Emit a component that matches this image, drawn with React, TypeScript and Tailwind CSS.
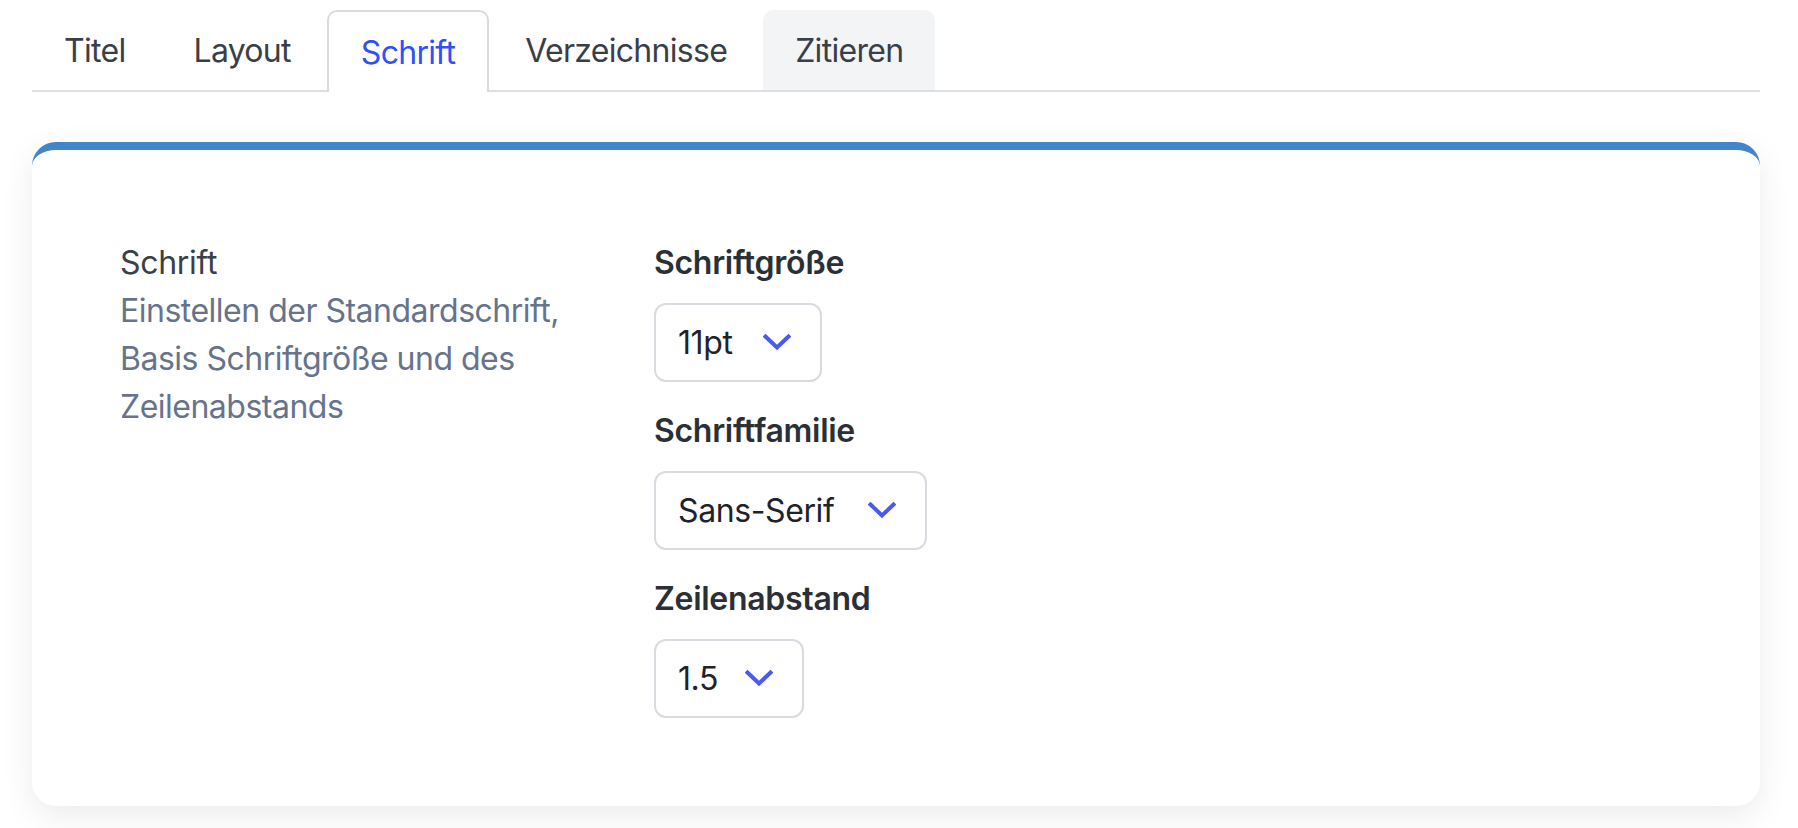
import React from "react";

const tabs = ["Titel", "Layout", "Schrift", "Verzeichnisse", "Zitieren"];

function Chevron() {
  return (
    <svg width="28" height="17" viewBox="0 0 28 17" fill="none" className="shrink-0">
      <polyline
        points="2.5,2.5 14,13.5 25.5,2.5"
        stroke="#4a5af0"
        strokeWidth="4"
        strokeLinecap="square"
        strokeLinejoin="miter"
      />
    </svg>
  );
}

function SelectBox({ value, width }: { value: string; width: string }) {
  return (
    <div
      className={`mt-4 flex h-[79px] items-center justify-between rounded-[12px] border-2 border-[#d8dbe0] bg-white pl-[22px] pr-[29px] text-[32px] tracking-[-0.4px] text-[#1f2329] ${width}`}
    >
      <span>{value}</span>
      <Chevron />
    </div>
  );
}

export default function App() {
  const active = "Schrift";

  return (
    <div className="min-h-screen bg-white pl-8 pr-[38px] pt-[10px] font-['Inter',sans-serif]">
      {/* Tabs */}
      <div className="flex items-end gap-1 border-b-2 border-[#dcdee3]">
        {tabs.map((t) => {
          if (t === active) {
            return (
              <div
                key={t}
                className="-mb-[2px] flex h-[82px] items-center rounded-t-[10px] border-2 border-b-0 border-[#d8dbe0] bg-white px-8 pt-[2px] text-[32px] tracking-[-0.7px] text-[#3050f8]"
              >
                {t}
              </div>
            );
          }
          return (
            <div
              key={t}
              className={`flex h-[80px] items-center rounded-t-[10px] px-8 pt-[2px] text-[32px] tracking-[-0.7px] text-[#3a3e48] ${
                t === "Zitieren" ? "bg-[#f3f4f6]" : ""
              }`}
            >
              {t}
            </div>
          );
        })}
      </div>

      {/* Card */}
      <div className="mt-[50px] rounded-[24px] border-t-8 border-[#4285c8] bg-white px-[88px] pt-[89px] pb-[88px] shadow-[0_10px_32px_rgba(0,0,0,0.08)]">
        <div className="flex gap-[64px]">
          <div className="w-[470px] shrink-0">
            <p className="text-[32px] leading-[48px] tracking-[-0.3px] text-[#3a3f48]">Schrift</p>
            <p className="text-[32px] leading-[48px] tracking-[-0.5px] text-[#66738b]">
              Einstellen der Standardschrift, Basis Schriftgröße und des Zeilenabstands
            </p>
          </div>

          <div className="flex flex-col">
            <label className="text-[32px] font-semibold leading-[48px] tracking-[-0.3px] text-[#2b2f36]">Schriftgröße</label>
            <SelectBox value="11pt" width="w-[168px]" />

            <label className="mt-[25px] text-[32px] font-semibold leading-[48px] tracking-[-0.3px] text-[#2b2f36]">Schriftfamilie</label>
            <SelectBox value="Sans-Serif" width="w-[273px]" />

            <label className="mt-[25px] text-[32px] font-semibold leading-[48px] tracking-[-0.3px] text-[#2b2f36]">Zeilenabstand</label>
            <SelectBox value="1.5" width="w-[150px]" />
          </div>
        </div>
      </div>
    </div>
  );
}
